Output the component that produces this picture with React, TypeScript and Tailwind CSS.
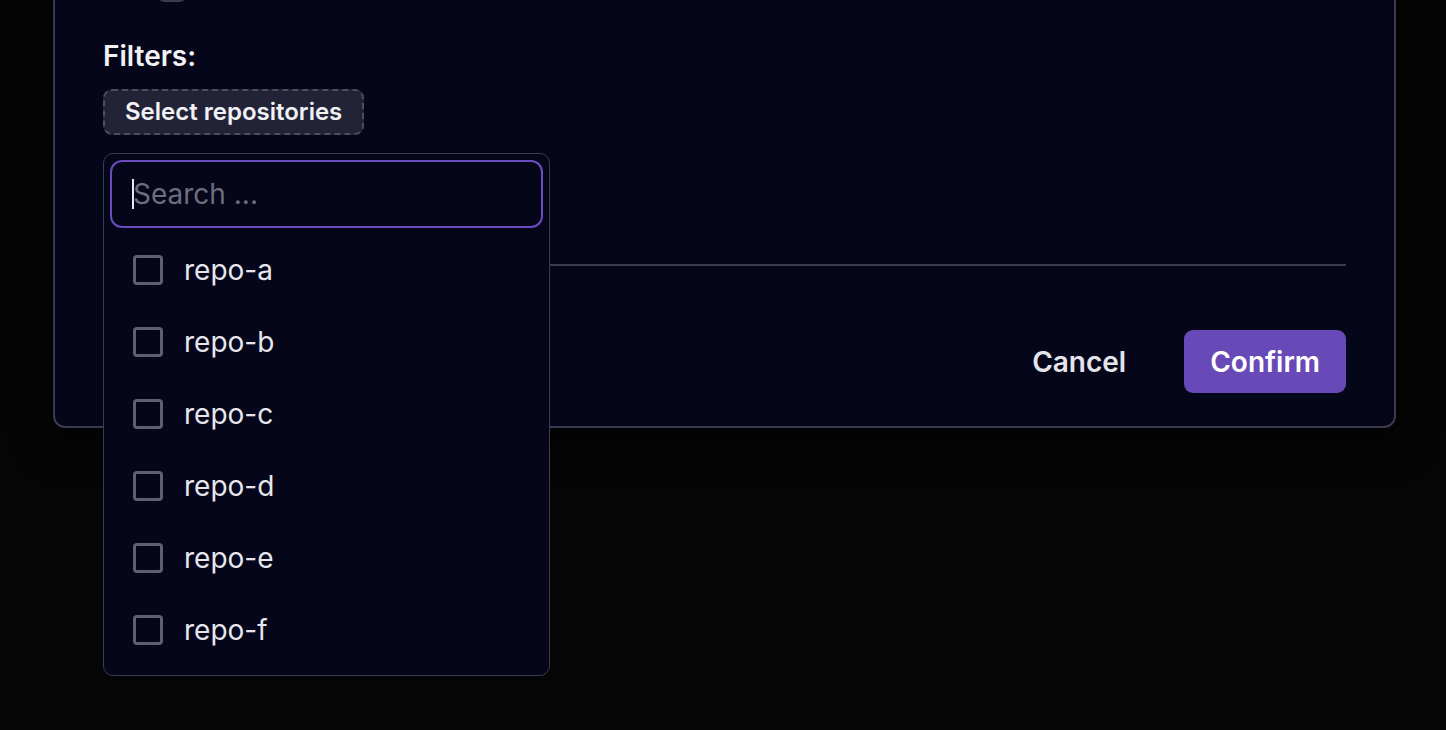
import React from "react";

const repos = ["repo-a", "repo-b", "repo-c", "repo-d", "repo-e", "repo-f"];

export default function App() {
  return (
    <div
      className="relative h-[730px] w-[1446px] overflow-hidden bg-[#050505]"
      style={{ fontFamily: "Inter, 'Noto Sans', sans-serif" }}
    >
      <div className="relative ml-[53px] mt-[-40px] w-[1343px] rounded-b-[12px] border-[2px] border-[#3a3b50] bg-[#05061a] px-[48px] pb-[33px] pt-[12px] shadow-[0_10px_40px_rgba(0,0,0,0.6)]">
        {/* partially visible control from above */}
        <div className="ml-[56px] h-[28px] w-[26px] rounded-[5px] bg-[#3a3b50]" />

        <div className="mt-[38px] text-[28px] font-semibold leading-[32px] text-[#f1f1f6]">
          Filters:
        </div>

        <div className="relative mt-[17px]">
          <button className="flex h-[46px] items-center rounded-[9px] border-[2px] border-dashed border-[#4d4e64] bg-[#222337] px-[20px] text-[24px] font-semibold text-[#f1f1f6]">
            Select repositories
          </button>

          {/* dropdown */}
          <div className="absolute left-0 top-[64px] z-10 w-[447px] rounded-[10px] border-[1.5px] border-[#3a3b50] bg-[#05061a] px-[6px] pb-[9px] pt-[6px]">
            <div className="flex h-[68px] items-center rounded-[12px] border-[2px] border-[#6a4bc0] px-[20px]">
              <span className="mr-[-1px] inline-block h-[30px] w-[2px] bg-[#e8e8ee]" />
              <span className="text-[28px] text-[#6c6d7f]">Search ...</span>
            </div>
            <div className="mt-[6px] flex flex-col">
              {repos.map((r) => (
                <div key={r} className="flex h-[72px] items-center px-[23px]">
                  <span className="h-[30px] w-[30px] rounded-[4px] border-[3px] border-[#5e5f70]" />
                  <span className="ml-[21px] text-[28px] text-[#e6e6ee]">{r}</span>
                </div>
              ))}
            </div>
          </div>
        </div>

        <div className="mt-[129px] h-[2px] w-full bg-[#3a3b50]" />

        <div className="mt-[64px] flex items-center justify-end gap-[31px]">
          <button className="h-[63px] px-[27px] text-[28px] font-semibold text-[#e4e4ec]">
            Cancel
          </button>
          <button className="h-[63px] rounded-[9px] bg-[#6849b8] px-[26px] text-[28px] font-semibold text-white">
            Confirm
          </button>
        </div>
      </div>
    </div>
  );
}
